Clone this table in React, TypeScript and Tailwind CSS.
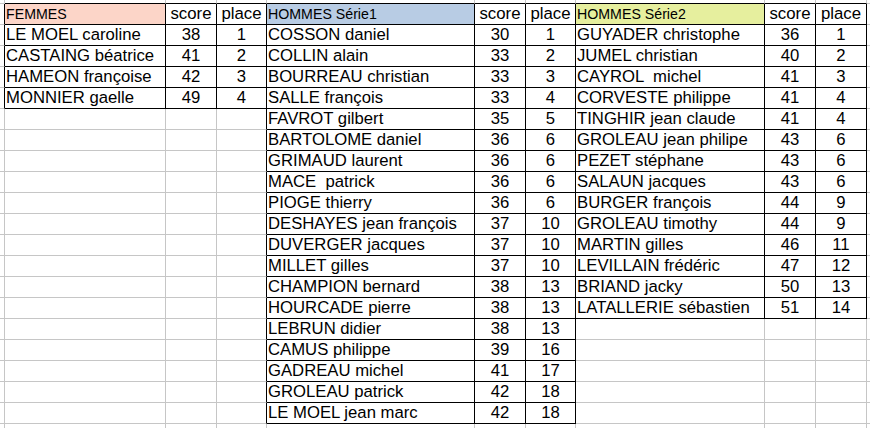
type Row = [string, number, number];

const femmes: Row[] = [
  ["LE MOEL caroline", 38, 1],
  ["CASTAING béatrice", 41, 2],
  ["HAMEON françoise", 42, 3],
  ["MONNIER gaelle", 49, 4],
];

const serie1: Row[] = [
  ["COSSON daniel", 30, 1],
  ["COLLIN alain", 33, 2],
  ["BOURREAU christian", 33, 3],
  ["SALLE françois", 33, 4],
  ["FAVROT gilbert", 35, 5],
  ["BARTOLOME daniel", 36, 6],
  ["GRIMAUD laurent", 36, 6],
  ["MACE  patrick", 36, 6],
  ["PIOGE thierry", 36, 6],
  ["DESHAYES jean françois", 37, 10],
  ["DUVERGER jacques", 37, 10],
  ["MILLET gilles", 37, 10],
  ["CHAMPION bernard", 38, 13],
  ["HOURCADE pierre", 38, 13],
  ["LEBRUN didier", 38, 13],
  ["CAMUS philippe", 39, 16],
  ["GADREAU michel", 41, 17],
  ["GROLEAU patrick", 42, 18],
  ["LE MOEL jean marc", 42, 18],
];

const serie2: Row[] = [
  ["GUYADER christophe", 36, 1],
  ["JUMEL christian", 40, 2],
  ["CAYROL  michel", 41, 3],
  ["CORVESTE philippe", 41, 4],
  ["TINGHIR jean claude", 41, 4],
  ["GROLEAU jean philipe", 43, 6],
  ["PEZET stéphane", 43, 6],
  ["SALAUN jacques", 43, 6],
  ["BURGER françois", 44, 9],
  ["GROLEAU timothy", 44, 9],
  ["MARTIN gilles", 46, 11],
  ["LEVILLAIN frédéric", 47, 12],
  ["BRIAND jacky", 50, 13],
  ["LATALLERIE sébastien", 51, 14],
];

interface Block {
  col: number;
  title: string;
  titleBg: string;
  rows: Row[];
}

const blocks: Block[] = [
  { col: 1, title: "FEMMES", titleBg: "bg-[#fcd5c8]", rows: femmes },
  { col: 4, title: "HOMMES Série1", titleBg: "bg-[#b8cce4]", rows: serie1 },
  { col: 7, title: "HOMMES Série2", titleBg: "bg-[#e6ef9e]", rows: serie2 },
];

const ROWS = 22;
const COLS = 11;

// which block (if any) covers a sheet cell
function blockAt(r: number, c: number): Block | undefined {
  return blocks.find(
    (b) => c >= b.col && c <= b.col + 2 && r >= 1 && r <= b.rows.length + 1
  );
}

function Cell({ r, c }: { r: number; c: number }): React.ReactElement {
  const here = blockAt(r, c);
  const rightBlack = !!here || !!blockAt(r, c + 1);
  const bottomBlack = !!here || !!blockAt(r + 1, c);
  const edges = [
    c < COLS - 1
      ? rightBlack
        ? "border-r border-r-black"
        : "border-r border-r-[#c6c6c6]"
      : "",
    r < ROWS - 1
      ? bottomBlack
        ? "border-b border-b-black"
        : "border-b border-b-[#c6c6c6]"
      : "",
  ].join(" ");

  let content: React.ReactNode = null;
  let extra = "";
  if (here) {
    const k = c - here.col;
    if (r === 1) {
      if (k === 0) {
        content = here.title;
        extra = `${here.titleBg} text-left pl-px text-[14.2px]`;
      } else {
        content = k === 1 ? "score" : "place";
        extra = "text-center text-[16.8px]";
      }
    } else {
      const row = here.rows[r - 2];
      content = k === 0 ? row[0] : k === 1 ? row[1] : row[2];
      extra = k === 0 ? "text-left pl-px text-[16.7px]" : "text-center text-[16.7px]";
    }
  }

  return (
    <div
      className={`${edges} ${extra} overflow-visible whitespace-pre leading-[20px] text-black`}
    >
      {content}
    </div>
  );
}

export default function App(): React.ReactElement {
  const cells: React.ReactElement[] = [];
  for (let r = 0; r < ROWS; r++) {
    for (let c = 0; c < COLS; c++) {
      cells.push(<Cell key={`${r}-${c}`} r={r} c={c} />);
    }
  }

  return (
    <div className="h-[428px] w-[870px] overflow-hidden bg-white font-['Liberation_Sans',Arial,sans-serif]">
      <div className="grid grid-cols-[5px_161px_51px_50px_208px_51px_50px_189px_51px_51px_4px] grid-rows-[4px_repeat(20,21px)_4px]">
        {cells}
      </div>
    </div>
  );
}
